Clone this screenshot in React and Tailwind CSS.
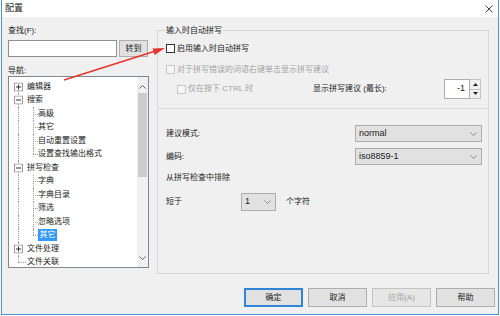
import React from 'react'

const FONT = "font-[family-name:'Liberation_Sans','Noto_Sans_CJK_SC',sans-serif]"

function ExpandBox({ open }) {
  return (
    <svg width="9" height="9" viewBox="0 0 9 9" className="absolute left-[5px] top-1/2 -translate-y-1/2">
      <rect x="0.5" y="0.5" width="8" height="8" fill="#fff" stroke="#9a9a9a" />
      <path d="M2 4.5 H7" stroke="#333" />
      {!open && <path d="M4.5 2 V7" stroke="#333" />}
    </svg>
  )
}

// one row of the navigation tree; dotted guide lines are drawn per row
function TreeRow({ label, child, toggle, first, last, lastChild, selected }) {
  return (
    <div className="relative h-[13.5px] flex items-center">
      <span
        className={
          first
            ? 'absolute left-[9px] top-1/2 bottom-0 border-l border-dotted border-[#a0a0a0]'
            : last
            ? 'absolute left-[9px] top-0 h-1/2 border-l border-dotted border-[#a0a0a0]'
            : 'absolute left-[9px] top-0 bottom-0 border-l border-dotted border-[#a0a0a0]'
        }
      />
      {child && (
        <>
          <span
            className={
              lastChild
                ? 'absolute left-[24px] top-0 h-1/2 border-l border-dotted border-[#a0a0a0]'
                : 'absolute left-[24px] top-0 bottom-0 border-l border-dotted border-[#a0a0a0]'
            }
          />
          <span className="absolute left-[24px] top-1/2 w-[5px] border-t border-dotted border-[#a0a0a0]" />
        </>
      )}
      {!child && !toggle && (
        <span className="absolute left-[9px] top-1/2 w-[8px] border-t border-dotted border-[#a0a0a0]" />
      )}
      {toggle && <ExpandBox open={toggle === '-'} />}
      <span className={child ? 'pl-[29px]' : 'pl-[18px]'}>
        <span
          className={
            selected
              ? 'bg-[#3399ff] text-white px-[1.5px] leading-[12px] inline-block'
              : 'leading-[12px] inline-block'
          }
        >
          {label}
        </span>
      </span>
    </div>
  )
}

function Chevron({ up, color = '#606060' }) {
  return (
    <svg width="7" height="4" viewBox="0 0 7 4">
      <path
        d={up ? 'M0.5 3.5 L3.5 0.5 L6.5 3.5' : 'M0.5 0.5 L3.5 3.5 L6.5 0.5'}
        fill="none"
        stroke={color}
        strokeWidth="1"
      />
    </svg>
  )
}

function Check({ disabled }) {
  return (
    <span
      className={
        disabled
          ? 'w-[9px] h-[9px] shrink-0 border border-[#c9c9c9] bg-[#f6f6f6]'
          : 'w-[9px] h-[9px] shrink-0 border border-[#333333] bg-white'
      }
    />
  )
}

function Select({ value, className }) {
  return (
    <div
      className={`h-[17px] border border-[#adadad] bg-[#e1e1e1] flex items-center justify-between pl-[3px] pr-[4px] ${className}`}
    >
      <span className="text-[9px]">{value}</span>
      <Chevron color="#8a8a8a" />
    </div>
  )
}

export default function App() {
  const tree = [
    { label: '编辑器', toggle: '+', first: true },
    { label: '搜索', toggle: '-' },
    { label: '高级', child: true },
    { label: '其它', child: true },
    { label: '自动重置设置', child: true },
    { label: '设置查找输出格式', child: true, lastChild: true },
    { label: '拼写检查', toggle: '-' },
    { label: '字典', child: true },
    { label: '字典目录', child: true },
    { label: '筛选', child: true },
    { label: '忽略选项', child: true },
    { label: '其它', child: true, lastChild: true, selected: true },
    { label: '文件处理', toggle: '+' },
    { label: '文件关联', last: true },
  ]

  return (
    <div className={`relative w-[500px] h-[316px] bg-white pl-[1px] text-[8px] text-[#1b1b1b] ${FONT}`}>
      <div className="w-[498px] h-[315px] border-x border-b border-[#4b95dc] flex flex-col">
        {/* title bar */}
        <div className="h-[17px] bg-white flex items-center justify-between pl-[3px] pr-[5px]">
          <span className="text-[9px]">配置</span>
          <svg width="8" height="8" viewBox="0 0 8 8">
            <path d="M0.5 0.5 L7.5 7.5 M7.5 0.5 L0.5 7.5" stroke="#444" strokeWidth="1" />
          </svg>
        </div>

        <div className="flex-1 bg-[#f0f0f0] flex flex-col">
          <div className="flex items-start pt-[8px] pl-[6px]">
            {/* left column */}
            <div className="w-[141px] flex flex-col">
              <div className="h-[11px] leading-[11px]">查找(F):</div>
              <div className="mt-[4px] flex gap-[2px]">
                <div className="w-[109px] h-[17px] bg-white border border-[#8f8f8f]" />
                <button className="w-[29px] h-[17px] bg-[#e1e1e1] border border-[#adadad] text-[8px] leading-none">
                  转到
                </button>
              </div>
              <div className="mt-[9px] h-[10px] leading-[10px]">导航:</div>
              <div className="h-[192px] bg-white border border-[#828790] flex">
                <div className="flex-1 pt-[3px] overflow-hidden">
                  {tree.map((r, i) => (
                    <TreeRow key={i} {...r} />
                  ))}
                </div>
                <div className="w-[11px] bg-[#f0f0f0] flex flex-col items-center">
                  <div className="h-[16px] flex items-center justify-center pt-[3px]">
                    <Chevron up />
                  </div>
                  <div className="w-[9px] h-[84px] bg-[#cdcdcd]" />
                  <div className="flex-1" />
                  <div className="h-[16px] flex items-center justify-center pb-[2px]">
                    <Chevron />
                  </div>
                </div>
              </div>
            </div>

            {/* right column */}
            <fieldset className="ml-[8px] w-[332px] h-[249px] border border-[#d9d9d9] pl-[8px] pr-[6px]">
              <legend className="-ml-[1px] px-[1px] h-[11px] leading-[11px]">输入时自动拼写</legend>

              <div className="pt-[6px] h-[19px] flex items-end">
                <div className="h-[13px] flex items-center">
                  <Check />
                  <span className="ml-[2px]">启用输入时自动拼写</span>
                </div>
              </div>

              <div className="mt-[8px] h-[13px] flex items-center text-[#a3a3a3]">
                <Check disabled />
                <span className="ml-[2px]">对于拼写错误的词语右键单击显示拼写建议</span>
              </div>

              <div className="mt-[3px] h-[20px] flex items-center">
                <div className="w-[147px] flex items-center pl-[11px] text-[#a3a3a3]">
                  <Check disabled />
                  <span className="ml-[2px]">仅在按下 CTRL 时</span>
                </div>
                <span>显示拼写建议 (最长):</span>
                <div className="ml-auto mr-[1px] flex h-[20px]">
                  <div className="w-[26px] h-full bg-white border border-[#adadad] flex items-center justify-end pr-[4px] text-[9px]">
                    -1
                  </div>
                  <div className="w-[11px] h-full flex flex-col border-y border-r border-[#c4c4c4]">
                    <div className="flex-1 flex items-center justify-center bg-[#f0f0f0] border-b border-[#c4c4c4]">
                      <svg width="5" height="3" viewBox="0 0 5 3"><path d="M0 3 L2.5 0 L5 3 Z" fill="#222" /></svg>
                    </div>
                    <div className="flex-1 flex items-center justify-center bg-[#f0f0f0]">
                      <svg width="5" height="3" viewBox="0 0 5 3"><path d="M0 0 L2.5 3 L5 0 Z" fill="#222" /></svg>
                    </div>
                  </div>
                </div>
              </div>

              <div className="mt-[9px] -ml-[8px] -mr-[6px] h-px bg-[#dadada]" />

              <div className="mt-[16px] flex items-center justify-between">
                <span>建议模式:</span>
                <Select value="normal" className="w-[127px]" />
              </div>
              <div className="mt-[6px] flex items-center justify-between">
                <span>编码:</span>
                <Select value="iso8859-1" className="w-[127px]" />
              </div>
              <div className="mt-[7px] h-[11px] leading-[11px]">从拼写检查中排除</div>
              <div className="mt-[10px] flex items-center">
                <span className="w-[75px]">短于</span>
                <Select value="1" className="w-[35px] h-[18px]" />
                <span className="ml-[10px]">个字符</span>
              </div>
            </fieldset>
          </div>

          {/* dialog buttons */}
          <div className="mt-auto pb-[7px] pr-[3px] flex justify-end gap-[5px]">
            <button className="w-[59px] h-[19px] border-2 border-[#2f86d8] bg-[#e1e1e1] text-[8px]">确定</button>
            <button className="w-[59px] h-[19px] border border-[#adadad] bg-[#e1e1e1] text-[8px]">取消</button>
            <button className="w-[59px] h-[19px] border border-[#c4c4c4] bg-[#e6e6e6] text-[8px] text-[#a3a3a3]">
              应用(A)
            </button>
            <button className="w-[59px] h-[19px] border border-[#adadad] bg-[#e1e1e1] text-[8px]">帮助</button>
          </div>
        </div>
      </div>

      {/* red annotation arrow */}
      <svg className="absolute inset-0 pointer-events-none" width="500" height="316" viewBox="0 0 500 316">
        <line x1="64" y1="80" x2="154" y2="51.5" stroke="#e53531" strokeWidth="1.6" />
        <polygon points="165,48 154.7,55 152.5,48.4" fill="#e53531" />
      </svg>
    </div>
  )
}
